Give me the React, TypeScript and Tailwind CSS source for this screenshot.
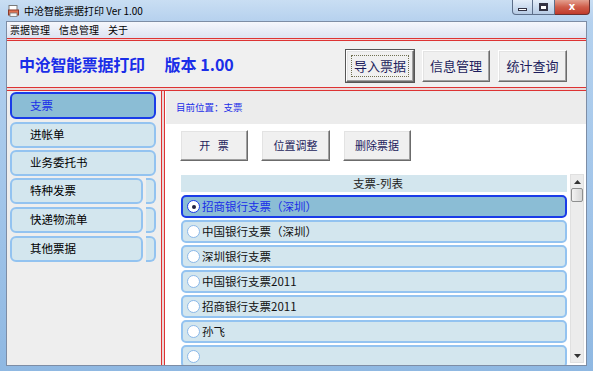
import React from "react";

const F = "font-['Noto_Sans_CJK_SC','Noto_Sans',sans-serif]";

function Btn3D({ label, focus = false, w = "w-[68px]", h = "h-[32px]", size = "text-[13px]" }: { label: string; focus?: boolean; w?: string; h?: string; size?: string }) {
  return (
    <div
      className={`${w} ${h} flex items-center justify-center bg-[#f0f0f0] border border-t-white border-l-white border-r-[#6b6b6b] border-b-[#6b6b6b] shadow-[inset_-1px_-1px_0_#a0a0a0,inset_1px_1px_0_#e3e3e3] ${focus ? "outline outline-1 outline-[#555]" : ""}`}
    >
      <div className={`${focus ? "border border-dotted border-[#707050]" : "border border-transparent"} w-[calc(100%-8px)] h-[calc(100%-8px)] flex items-center justify-center ${size} text-[#1c1c5c] whitespace-pre`}>
        {label}
      </div>
    </div>
  );
}

function Radio({ checked }: { checked: boolean }) {
  return (
    <div
      className={`w-[13px] h-[13px] rounded-full bg-white flex items-center justify-center border ${checked ? "border-[#1a3ce8] border-[1.5px]" : "border-[#8ab8e8]"}`}
    >
      {checked && <div className="w-[4px] h-[4px] rounded-full bg-[#202040]" />}
    </div>
  );
}

export default function App() {
  const sideItems = ["进帐单", "业务委托书"];
  const sideTails = ["特种发票", "快递物流单", "其他票据"];
  const rows = ["中国银行支票（深圳）", "深圳银行支票", "中国银行支票2011", "招商银行支票2011", "孙飞", ""];
  return (
    <div className={`w-[593px] h-[371px] overflow-hidden flex flex-col bg-gradient-to-b from-[#b7d3ef] via-[#a3c6ea] to-[#8fb8e2] ${F}`}>
      {/* title bar */}
      <div className="h-[21px] flex items-start justify-between bg-gradient-to-b from-[#c9def3] to-[#b6d1ee]">
        <div className="flex items-center h-[21px] pl-[8px] gap-[4px]">
          <svg width="11" height="12" viewBox="0 0 11 12">
            <rect x="1" y="0.5" width="8" height="6" fill="#fff" stroke="#7a7a7a" strokeWidth="1" />
            <rect x="0.5" y="5" width="10" height="5" fill="#e07050" stroke="#8a3a2a" strokeWidth="1" />
            <rect x="2" y="8" width="7" height="3.5" fill="#f4f4f4" stroke="#777" strokeWidth="0.8" />
          </svg>
          <span className="text-[10px] text-black leading-none ml-[1px]">中沧智能票据打印 Ver 1.00</span>
        </div>
        <div className="flex mr-[3px]">
          <div className="w-[21px] h-[15px] rounded-bl-[4px] border border-t-0 border-[#5d6f8a] bg-gradient-to-b from-[#e4eef9] to-[#b6cbe4] flex items-end justify-center pb-[3px]">
            <div className="w-[9px] h-[3px] bg-white border border-[#334]" />
          </div>
          <div className="w-[22px] h-[15px] border border-t-0 border-l-0 border-[#5d6f8a] bg-gradient-to-b from-[#e4eef9] to-[#b6cbe4] flex items-center justify-center">
            <div className="w-[9px] h-[8px] bg-white border-[2px] border-[#334] border-t-[3px]" />
          </div>
          <div className="w-[35px] h-[15px] rounded-br-[4px] border border-t-0 border-l-0 border-[#6b3030] bg-gradient-to-b from-[#e3a090] via-[#cf5d4a] to-[#c0392b] flex items-center justify-center">
            <span className="text-white text-[10px] font-bold leading-none font-['DejaVu_Sans',sans-serif]">x</span>
          </div>
        </div>
      </div>

      {/* client */}
      <div className="mx-[6px] h-[345px] border border-[#7d8da5] bg-white flex flex-col overflow-hidden">
        {/* menu */}
        <div className="h-[16px] flex items-center gap-[9px] pl-[3px] bg-gradient-to-b from-[#f5f7fc] to-[#dde3f1] text-[10px] text-black leading-none">
          <span>票据管理</span>
          <span>信息管理</span>
          <span>关于</span>
        </div>
        <div className="h-[3px] border-y border-[#d33] bg-[#f2d4d4]" />
        {/* header */}
        <div className="h-[46px] flex items-center justify-between bg-[#f0f0f0] pt-[1px] pl-[12px] pr-[19px]">
          <div className="flex items-center text-[#1a2ee8] font-bold text-[16px] mt-[-1px]">
            <span className="tracking-[-0.3px]">中沧智能票据打印</span>
            <span className="ml-[20px]">版本 1.00</span>
          </div>
          <div className="flex gap-[8px] mt-[2px]">
            <Btn3D label="导入票据" focus />
            <Btn3D label="信息管理" />
            <Btn3D label="统计查询" w="w-[69px]" />
          </div>
        </div>
        <div className="h-[4px] border-y border-[#d33] bg-[#eadada]" />
        {/* body */}
        <div className="flex-1 flex min-h-0">
          {/* left */}
          <div className="w-[154px] bg-[#eeeeee] pl-[3px] pt-[1px] flex flex-col">
            <div className="w-[146px] h-[27px] mb-[3px] rounded-[6px] border-2 border-[#1a3ce8] bg-[#8bbdd5] flex items-center pl-[18px] text-[11.5px] text-[#1a2ee8]">
              支票
            </div>
            <div className="flex flex-col gap-[2px]">
              {sideItems.map((t) => (
                <div key={t} className="w-[146px] h-[26px] rounded-[6px] border-2 border-[#93c3f0] bg-[#d3e6ee] flex items-center pl-[18px] text-[11.5px] text-black">
                  {t}
                </div>
              ))}
              {sideTails.map((t, i) => (
                <div key={t} className={`flex w-[146px] h-[26px] ${i === 0 ? "" : "mt-[1px]"}`}>
                  <div className="w-[133px] h-full rounded-[6px] border-2 border-[#93c3f0] bg-[#d3e6ee] flex items-center pl-[18px] text-[11.5px] text-black">
                    {t}
                  </div>
                  <div className="ml-[3px] w-[10px] h-full rounded-r-[6px] border-2 border-l-0 border-[#93c3f0] bg-[#d3e6ee]" />
                </div>
              ))}
            </div>
          </div>
          {/* separator */}
          <div className="w-[4px] border-x border-[#d33] bg-[#ead8d8]" />
          {/* right */}
          <div className="flex-1 flex flex-col bg-white">
            <div className="h-[33px] ml-[1px] bg-[#ececec] flex items-center pl-[10px] text-[9.5px] text-[#1a2ee8]">
              目前位置：支票
            </div>
            <div className="mt-[6px] pl-[15px] flex gap-[13px]">
              <Btn3D label={"开   票"} h="h-[31px]" size="text-[11px]" />
              <Btn3D label="位置调整" w="w-[69px]" h="h-[31px]" size="text-[11px]" />
              <Btn3D label="删除票据" h="h-[31px]" size="text-[11px]" />
            </div>
            <div className="mt-[13px] flex pl-[16px] flex-1 min-h-0">
              <div className="w-[386px] flex flex-col">
                <div className="mt-[1px] h-[23px] bg-[#d3e6ee] flex items-center justify-center text-[11.5px] text-[#222] pl-[8px]">
                  支票-列表
                </div>
                <div className="mt-[3px] flex flex-col gap-[2px]">
                  <div className="h-[23px] rounded-[5px] border-2 border-[#1a3ce8] bg-[#8bbdd5] flex items-center pl-[4px] gap-[2px] text-[11.5px] text-[#1a2ee8]">
                    <Radio checked />
                    <span>招商银行支票（深圳）</span>
                  </div>
                  {rows.map((t, i) => (
                    <div key={i} className="h-[23px] shrink-0 rounded-[5px] border-2 border-[#93c3f0] bg-[#d3e6ee] flex items-center pl-[4px] gap-[2px] text-[11.5px] text-[#111]">
                      <Radio checked={false} />
                      <span>{t}</span>
                    </div>
                  ))}
                </div>
              </div>
              <div className="ml-[3px] w-[14px] h-[189px] bg-[#ececec] border border-[#e0e0e0] flex flex-col items-center">
                <div className="h-[13px] flex items-center justify-center">
                  <svg width="7" height="4" viewBox="0 0 7 4"><path d="M0 4 L3.5 0 L7 4 Z" fill="#333" /></svg>
                </div>
                <div className="w-[12px] h-[14px] rounded-[2px] border border-[#8e8f8f] bg-gradient-to-r from-[#f3f3f3] to-[#d6d6d6]" />
                <div className="flex-1" />
                <div className="h-[13px] flex items-center justify-center">
                  <svg width="7" height="4" viewBox="0 0 7 4"><path d="M0 0 L3.5 4 L7 0 Z" fill="#333" /></svg>
                </div>
              </div>
            </div>
          </div>
        </div>
      </div>
    </div>
  );
}
